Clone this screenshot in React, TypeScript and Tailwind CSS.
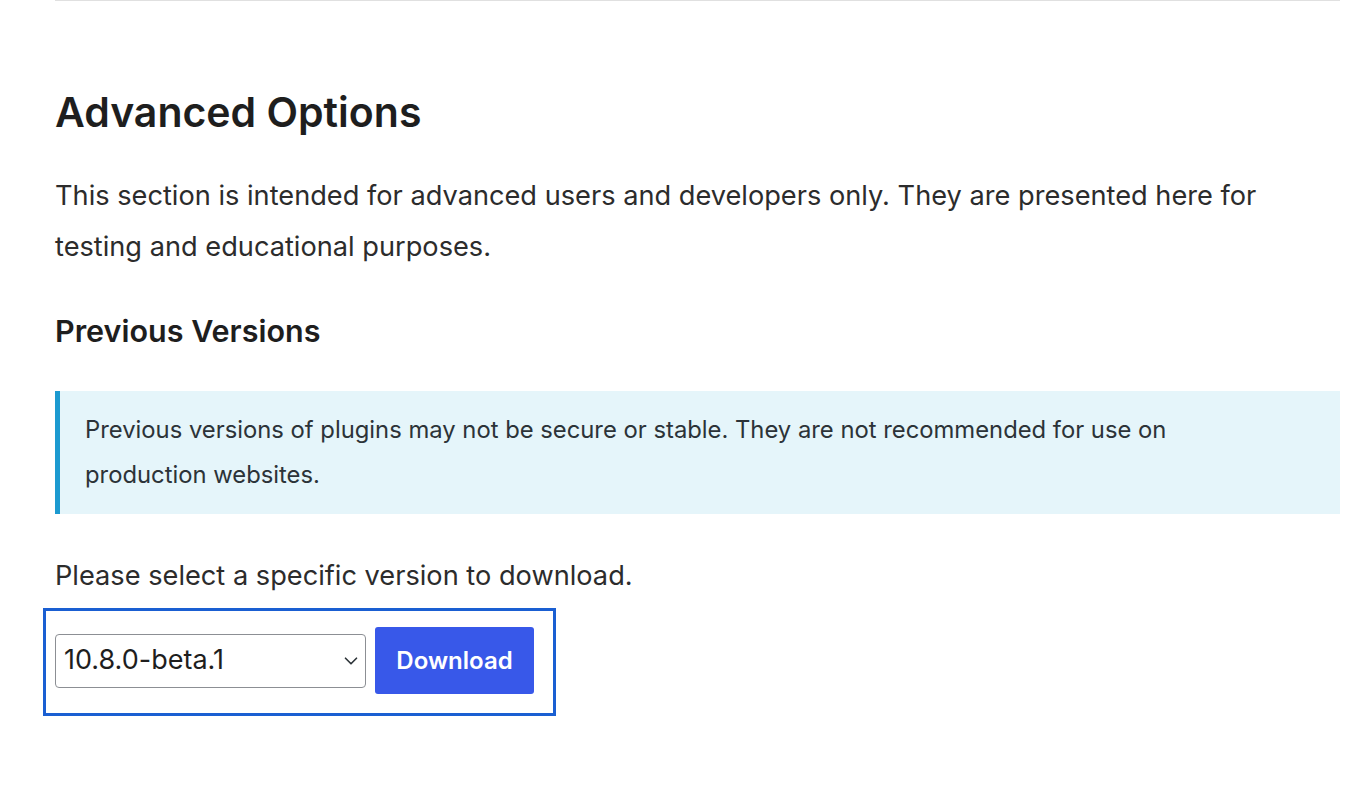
import { ChevronDown } from "lucide-react";

export default function App() {
  return (
    <div className="min-h-screen bg-white font-['Inter',sans-serif] text-[#1e1e1e]">
      <div className="ml-[55px] w-[1285px] border-t border-[#e0e0e0]">
        <h2 className="mt-[87px] text-[41px] font-semibold leading-[48px]">Advanced Options</h2>

        <p className="mt-[34px] text-[27.2px] leading-[51px] text-[#2c2c2c]">
          This section is intended for advanced users and developers only. They are presented here
          for testing and educational purposes.
        </p>

        <h3 className="mt-[41px] text-[30.5px] font-semibold leading-[36px]">Previous Versions</h3>

        <div className="mt-[42px] border-l-[5px] border-[#1c9ad0] bg-[#e5f5fa] pb-[17px] pl-[25px] pr-[120px] pt-[16px]">
          <p className="text-[23.8px] leading-[45px] text-[#2c3338]">
            Previous versions of plugins may not be secure or stable. They are not recommended for
            use on production websites.
          </p>
        </div>

        <p className="mt-[36px] text-[27.2px] leading-[51px] text-[#2c2c2c]">
          Please select a specific version to download.
        </p>

        <div className="-ml-3 mt-[7px] inline-flex items-center gap-[9px] border-[3px] border-[#1a5fd2] pb-[19px] pl-[9px] pr-[19px] pt-[16px]">
          <div className="relative">
            <select
              defaultValue="10.8.0-beta.1"
              className="h-[54px] w-[311px] appearance-none rounded-[4px] border border-[#8c8f94] bg-white pl-[8px] pr-8 text-[27px] text-[#1e1e1e]"
            >
              <option>10.8.0-beta.1</option>
            </select>
            <ChevronDown
              className="pointer-events-none absolute right-[4px] top-1/2 h-[22px] w-[22px] -translate-y-1/2 text-[#2c3338]"
              strokeWidth={1.8}
            />
          </div>
          <button
            type="button"
            className="h-[67px] w-[159px] rounded-[3px] bg-[#3858e9] text-[24px] font-semibold text-white"
          >
            Download
          </button>
        </div>
      </div>
    </div>
  );
}
